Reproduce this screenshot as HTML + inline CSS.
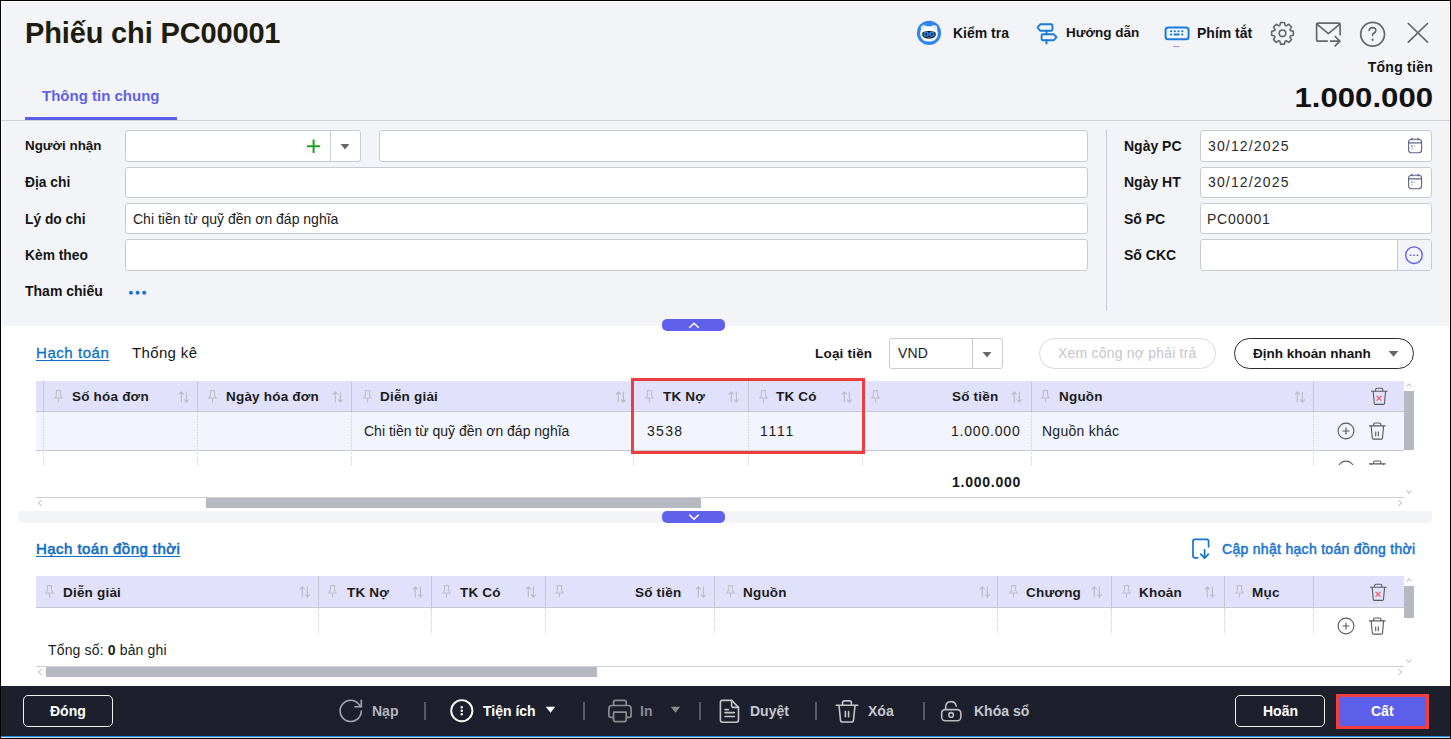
<!DOCTYPE html>
<html><head><meta charset="utf-8">
<style>
*{box-sizing:border-box;margin:0;padding:0}
html,body{width:1451px;height:739px;overflow:hidden;background:#000}
body{font-family:"Liberation Sans",sans-serif;color:#1c1c1c;position:relative}
.a{position:absolute}
.t{position:absolute;white-space:nowrap;line-height:1}
.b{font-weight:700}
#page{position:absolute;left:1px;top:1px;width:1449px;height:735px;background:#f3f4f8;border-top:1px solid #fff;border-left:1px solid #fff;border-right:1px solid #fff;overflow:hidden}
.inp{position:absolute;background:#fff;border:1px solid #c9cbd3;border-radius:3px}
.lbl{position:absolute;font-weight:700;font-size:14px;white-space:nowrap;line-height:1;color:#151515}
.hdr{position:absolute;background:#e1e1fb;border-bottom:1px solid #c7c7d0}
.vl{position:absolute;width:1px;background:#c7c7d0}
.dl{position:absolute;width:0;border-left:1px dotted #cfcfd6}
.ht{position:absolute;white-space:nowrap;line-height:1;font-weight:700;font-size:13.5px;letter-spacing:0.2px;color:#1b1b1b}
</style></head><body>

<div id="page"></div>
<!-- header -->
<div class="t b" style="left:25px;top:19px;font-size:29px;letter-spacing:-0.15px;color:#1f1d0f">Phiếu chi PC00001</div>
<div class="t b" style="left:42px;top:88px;font-size:15px;color:#5f62e6">Thông tin chung</div>
<div class="a" style="left:25px;top:117px;width:152px;height:3px;background:#5b5ee8"></div>
<div class="a" style="left:1px;top:120px;width:1449px;height:1px;background:#cfd0d6"></div>

<!-- header tools -->
<svg class="a" style="left:916px;top:20px" width="26" height="26" viewBox="0 0 26 26">
 <circle cx="13" cy="12.9" r="12.1" fill="#2f86ee"/>
 <path d="M5 9.6 Q4.2 5.6 7.6 5.2 Q9.8 5.2 10.9 6.6 Q13 6.1 15.1 6.6 Q16.2 5.2 18.4 5.2 Q21.8 5.6 21 9.6 Q22.4 12.8 21.4 16.3 Q20 21.4 13 21.6 Q6 21.4 4.6 16.3 Q3.6 12.8 5 9.6Z" fill="#fff"/>
 <path d="M5.6 8.8 Q5.4 6.3 7.6 6.1 Q9.3 6.2 10 7.4 Q8 8.1 7.2 9.9Z M20.4 8.8 Q20.6 6.3 18.4 6.1 Q16.7 6.2 16 7.4 Q18 8.1 18.8 9.9Z" fill="#d6e6fb"/>
 <path d="M6.2 13.6 Q6.4 11 13 10.9 Q19.6 11 19.8 13.6 Q20.2 18.4 13 18.7 Q5.8 18.4 6.2 13.6Z" fill="#0d0d12"/>
 <circle cx="10.2" cy="14.2" r="2.7" fill="#2a86f2"/><circle cx="15.9" cy="14.2" r="2.7" fill="#2a86f2"/>
 <ellipse cx="10.2" cy="14.3" rx="0.9" ry="1.3" fill="#0d0d12"/><ellipse cx="15.9" cy="14.3" rx="0.9" ry="1.3" fill="#0d0d12"/>
 <path d="M11.8 17.6 Q13 18.6 14.2 17.6" stroke="#bbb" stroke-width="0.8" fill="none"/>
</svg>
<div class="t b" style="left:953px;top:26px;font-size:14px;color:#151515">Kiểm tra</div>
<svg class="a" style="left:1034px;top:21px" width="26" height="26" viewBox="0 0 26 26" fill="none" stroke="#1a7ad9" stroke-width="1.9" stroke-linejoin="round" stroke-linecap="round">
 <path d="M3.5 6.5 L6.2 3.3 H17.3 Q18.4 3.3 18.4 4.4 V8.6 Q18.4 9.7 17.3 9.7 H6.2 Z"/>
 <path d="M8.6 13.3 Q7.6 13.3 7.6 14.4 V18.1 Q7.6 19.2 8.6 19.2 H19.8 L22.6 16.2 L19.8 13.3 Z"/>
 <path d="M12.5 9.7 V13.3 M12.5 19.2 V22.6"/>
</svg>
<div class="t b" style="left:1066px;top:26px;font-size:13.5px;color:#151515">Hướng dẫn</div>
<svg class="a" style="left:1162px;top:24px" width="30" height="24" viewBox="0 0 30 24" fill="none" stroke="#1a7ad9" stroke-width="2">
 <rect x="3.6" y="3.4" width="23" height="11.9" rx="2.6"/>
 <g stroke-width="1.9" stroke-linecap="round"><path d="M8.9 7.2h.4M12.6 7.2h.4M16.3 7.2h.4M20.1 7.2h.4M8.9 10.5h.4M12.5 10.5h4.2M20.1 10.5h.4"/></g>
 <path d="M11.5 22.6h6" stroke="#7a62c9" stroke-width="1" opacity="0.7"/>
</svg>
<div class="t b" style="left:1197px;top:26px;font-size:14px;color:#151515">Phím tắt</div>
<svg class="a" style="left:1268px;top:19px" width="30" height="30" viewBox="0 0 30 30" fill="none" stroke="#676767" stroke-width="1.6" stroke-linejoin="round"><path d="M11.80 6.45 L12.59 3.47 L16.41 3.47 L17.20 6.45 L18.14 6.84 L20.81 5.29 L23.51 7.99 L21.96 10.66 L22.35 11.60 L25.33 12.39 L25.33 16.21 L22.35 17.00 L21.96 17.94 L23.51 20.61 L20.81 23.31 L18.14 21.76 L17.20 22.15 L16.41 25.13 L12.59 25.13 L11.80 22.15 L10.86 21.76 L8.19 23.31 L5.49 20.61 L7.04 17.94 L6.65 17.00 L3.67 16.21 L3.67 12.39 L6.65 11.60 L7.04 10.66 L5.49 7.99 L8.19 5.29 L10.86 6.84Z"/><circle cx="14.5" cy="14.3" r="3.3"/></svg>
<svg class="a" style="left:1312px;top:19px" width="32" height="30" viewBox="0 0 32 30" fill="none" stroke="#676767" stroke-width="1.7" stroke-linecap="round" stroke-linejoin="round">
 <path d="M15.2 22.2 H6.2 Q4.6 22.2 4.6 20.6 V5.7 Q4.6 4.1 6.2 4.1 H26.6 Q28.1 4.1 28.1 5.7 V15.8"/>
 <path d="M4.9 5.2 L16.4 14.6 L27.8 5.2"/>
 <path d="M18.6 22.2 H27.9 M23.2 17.5 L27.9 22.2 L23.2 26.8"/>
</svg>
<svg class="a" style="left:1358px;top:20px" width="30" height="30" viewBox="0 0 30 30" fill="none" stroke="#676767" stroke-width="1.7" stroke-linecap="round">
 <circle cx="14.6" cy="14.2" r="11.9"/>
 <path d="M11.2 10.5 Q11.6 7.6 14.6 7.6 Q17.9 7.7 17.8 10.6 Q17.7 12.6 15.2 13.6 Q14.5 14 14.6 15.4"/>
 <path d="M14.6 19.6 v0.3" stroke-width="2"/>
</svg>
<svg class="a" style="left:1404px;top:19px" width="28" height="28" viewBox="0 0 28 28" stroke="#676767" stroke-width="1.7" stroke-linecap="round">
 <path d="M4.3 4.5 L23.5 23.2 M23.5 4.5 L4.3 23.2"/>
</svg>
<div class="t b" style="right:18px;top:60px;font-size:14px;letter-spacing:0.25px;color:#121212">Tổng tiền</div>
<div class="t b" style="right:18px;top:85px;font-size:27px;transform:scaleX(1.155);transform-origin:right top;color:#121212">1.000.000</div>


<!-- form -->
<div class="lbl" style="left:25px;top:139px;font-size:13.4px">Người nhận</div>
<div class="lbl" style="left:25px;top:176px;font-size:13.8px">Địa chi</div>
<div class="lbl" style="left:25px;top:213px;font-size:13.8px">Lý do chi</div>
<div class="lbl" style="left:25px;top:249px;font-size:13.8px">Kèm theo</div>
<div class="lbl" style="left:25px;top:284px;font-size:14px">Tham chiếu</div>
<div class="inp" style="left:125px;top:130px;width:236px;height:32px"></div>
<div class="a" style="left:330px;top:131px;width:1px;height:30px;background:#c9cbd3"></div>
<svg class="a" style="left:305px;top:138px" width="17" height="17" viewBox="0 0 17 17" stroke="#1aa51f" stroke-width="2"><path d="M8.6 1.6V15M1.9 8.3H15.2"/></svg>
<svg class="a" style="left:340px;top:143px" width="10" height="8" viewBox="0 0 10 8"><path d="M0.6 1H9.4L5 6.6Z" fill="#686868"/></svg>
<div class="inp" style="left:379px;top:130px;width:709px;height:32px"></div>
<div class="inp" style="left:125px;top:167px;width:963px;height:31px"></div>
<div class="inp" style="left:125px;top:203px;width:963px;height:31px"></div>
<div class="t" style="left:133px;top:212px;font-size:14px;color:#1b1b1b">Chi tiền từ quỹ đền ơn đáp nghĩa</div>
<div class="inp" style="left:125px;top:239px;width:963px;height:32px"></div>
<svg class="a" style="left:127px;top:288px" width="22" height="9" viewBox="0 0 22 9" fill="#1a73d0"><circle cx="4" cy="4.7" r="2"/><circle cx="10.6" cy="4.7" r="2"/><circle cx="17.2" cy="4.7" r="2"/></svg>
<div class="a" style="left:1106px;top:130px;width:1px;height:181px;background:#c9cbd3"></div>
<div class="lbl" style="left:1124px;top:139px;font-size:14px">Ngày PC</div>
<div class="lbl" style="left:1124px;top:175px;font-size:14px">Ngày HT</div>
<div class="lbl" style="left:1124px;top:212px;font-size:14px">Số PC</div>
<div class="lbl" style="left:1124px;top:248px;font-size:14px">Số CKC</div>
<div class="inp" style="left:1200px;top:130px;width:232px;height:32px"></div>
<div class="inp" style="left:1200px;top:167px;width:232px;height:31px"></div>
<div class="inp" style="left:1200px;top:203px;width:232px;height:31px"></div>
<div class="inp" style="left:1200px;top:239px;width:232px;height:32px;overflow:hidden"><div class="a" style="left:196px;top:0;width:35px;height:30px;background:#f3f4f8;border-left:1px solid #c9cbd3"></div></div>
<svg class="a" style="left:1404px;top:245px" width="20" height="20" viewBox="0 0 20 20" fill="none" stroke="#5b5ee8" stroke-width="1.3"><circle cx="10" cy="10.2" r="8.3"/><path d="M6.4 10.2h.5M9.8 10.2h.5M13.2 10.2h.5" stroke-width="1.4" stroke-linecap="round"/></svg>
<div class="t" style="left:1208px;top:139px;font-size:14px;letter-spacing:1.15px;color:#2a2a2a">30/12/2025</div>
<div class="t" style="left:1208px;top:175px;font-size:14px;letter-spacing:1.15px;color:#2a2a2a">30/12/2025</div>
<div class="t" style="left:1207px;top:212px;font-size:14px;letter-spacing:0.75px;color:#2a2a2a">PC00001</div>
<svg class="a" style="left:1407px;top:137px" width="16" height="17" viewBox="0 0 16 17" fill="none" stroke="#5d6387" stroke-width="1.1"><rect x="1.6" y="2.2" width="13" height="13.6" rx="3"/><path d="M1.6 5.9h13M5 0.8v2.5M11 0.8v2.5" stroke-width="1.3"/><path d="M5 8.6v1.3M5 11.6v.6M7.5 8.8h.6" stroke-width="1.2"/></svg><svg class="a" style="left:1407px;top:173px" width="16" height="17" viewBox="0 0 16 17" fill="none" stroke="#5d6387" stroke-width="1.1"><rect x="1.6" y="2.2" width="13" height="13.6" rx="3"/><path d="M1.6 5.9h13M5 0.8v2.5M11 0.8v2.5" stroke-width="1.3"/><path d="M5 8.6v1.3M5 11.6v.6M7.5 8.8h.6" stroke-width="1.2"/></svg>
























<!-- grid -->
<div class="a" style="left:2px;top:326px;width:1447px;height:360px;background:#fff"></div>
<div class="a" style="left:18px;top:511px;width:1414px;height:12px;background:#f3f4f8;border-radius:3px"></div>
<div class="a" style="left:662px;top:319px;width:63px;height:12px;background:#5f61ec;border-radius:5px"></div>
<svg class="a" style="left:687px;top:320px" width="14" height="10" viewBox="0 0 14 10" fill="none" stroke="#fff" stroke-width="1.5"><path d="M2.3 7.8L7 3.2l4.7 4.6"/></svg>
<div class="a" style="left:662px;top:511px;width:63px;height:12px;background:#5f61ec;border-radius:5px"></div>
<svg class="a" style="left:687px;top:512px" width="14" height="10" viewBox="0 0 14 10" fill="none" stroke="#fff" stroke-width="1.5"><path d="M2.3 2.6L7 7.2l4.7-4.6"/></svg>
<div class="t" style="left:36px;top:345px;font-size:15px;letter-spacing:0.55px;color:#0f6ec6;-webkit-text-stroke:0.3px #0f6ec6;text-decoration:underline;text-underline-offset:2px">Hạch toán</div>
<div class="t" style="left:132px;top:345px;font-size:15px;letter-spacing:0.35px;color:#151515">Thống kê</div>
<div class="lbl" style="left:815px;top:347px;font-size:13.5px;letter-spacing:0.2px">Loại tiền</div>
<div class="inp" style="left:889px;top:338px;width:114px;height:31px"></div>
<div class="a" style="left:972px;top:339px;width:1px;height:29px;background:#c9cbd3"></div>
<div class="t" style="left:898px;top:346px;font-size:14px;letter-spacing:0.2px;color:#1b1b1b">VND</div>
<svg class="a" style="left:982px;top:351px" width="10" height="8" viewBox="0 0 10 8"><path d="M0.6 1H9.4L5 6.6Z" fill="#686868"/></svg>
<div class="a" style="left:1039px;top:338px;width:177px;height:31px;border:1px solid #dadbe0;border-radius:16px"></div>
<div class="t" style="left:1058px;top:346px;font-size:14px;letter-spacing:0.2px;color:#c5c6cc">Xem công nợ phải trả</div>
<div class="a" style="left:1234px;top:338px;width:180px;height:31px;border:1px solid #2b2b2b;border-radius:16px"></div>
<div class="t b" style="left:1253px;top:347px;font-size:13.5px;color:#151515">Định khoản nhanh</div>
<svg class="a" style="left:1388px;top:350px" width="11" height="8" viewBox="0 0 11 8"><path d="M0.6 1H10.4L5.5 6.8Z" fill="#686868"/></svg>
<div class="hdr" style="left:36px;top:381px;width:1368px;height:31px"></div>
<div class="a" style="left:36px;top:412px;width:1368px;height:39px;background:#f3f5fe;border-bottom:1px solid #c7c7d0"></div>
<div class="vl" style="left:43px;top:381px;height:30px"></div>
<div class="dl" style="left:43px;top:412px;height:53px"></div>
<div class="vl" style="left:197px;top:381px;height:30px"></div>
<div class="dl" style="left:197px;top:412px;height:53px"></div>
<div class="vl" style="left:351px;top:381px;height:30px"></div>
<div class="dl" style="left:351px;top:412px;height:53px"></div>
<div class="vl" style="left:633px;top:381px;height:30px"></div>
<div class="dl" style="left:633px;top:412px;height:53px"></div>
<div class="vl" style="left:748px;top:381px;height:30px"></div>
<div class="dl" style="left:748px;top:412px;height:53px"></div>
<div class="vl" style="left:862px;top:381px;height:30px"></div>
<div class="dl" style="left:862px;top:412px;height:53px"></div>
<div class="vl" style="left:1031px;top:381px;height:30px"></div>
<div class="dl" style="left:1031px;top:412px;height:53px"></div>
<div class="vl" style="left:1313px;top:381px;height:30px"></div>
<div class="dl" style="left:1313px;top:412px;height:53px"></div>
<svg class="a" style="left:53px;top:389px" width="11" height="15" viewBox="0 0 11 15" fill="none" stroke="#bfc0c9" stroke-width="1.1"><path d="M3.4 1.6h4.2v5.2l1.6 2.2H1.8l1.6-2.2z"/><path d="M5.5 9v4.6"/></svg>
<div class="ht" style="left:72px;top:390px">Số hóa đơn</div>
<svg class="a" style="left:178px;top:390px" width="13" height="14" viewBox="0 0 13 14" fill="none" stroke="#bcbdc8" stroke-width="1.2" stroke-linecap="round" stroke-linejoin="round"><path d="M3.3 12V2M1.2 4.2l2.1-2.2 2.1 2.2M8.4 2v10M6.3 9.8l2.1 2.2 2.1-2.2"/></svg>
<svg class="a" style="left:207px;top:389px" width="11" height="15" viewBox="0 0 11 15" fill="none" stroke="#bfc0c9" stroke-width="1.1"><path d="M3.4 1.6h4.2v5.2l1.6 2.2H1.8l1.6-2.2z"/><path d="M5.5 9v4.6"/></svg>
<div class="ht" style="left:226px;top:390px">Ngày hóa đơn</div>
<svg class="a" style="left:332px;top:390px" width="13" height="14" viewBox="0 0 13 14" fill="none" stroke="#bcbdc8" stroke-width="1.2" stroke-linecap="round" stroke-linejoin="round"><path d="M3.3 12V2M1.2 4.2l2.1-2.2 2.1 2.2M8.4 2v10M6.3 9.8l2.1 2.2 2.1-2.2"/></svg>
<svg class="a" style="left:362px;top:389px" width="11" height="15" viewBox="0 0 11 15" fill="none" stroke="#bfc0c9" stroke-width="1.1"><path d="M3.4 1.6h4.2v5.2l1.6 2.2H1.8l1.6-2.2z"/><path d="M5.5 9v4.6"/></svg>
<div class="ht" style="left:380px;top:390px">Diễn giải</div>
<svg class="a" style="left:615px;top:390px" width="13" height="14" viewBox="0 0 13 14" fill="none" stroke="#bcbdc8" stroke-width="1.2" stroke-linecap="round" stroke-linejoin="round"><path d="M3.3 12V2M1.2 4.2l2.1-2.2 2.1 2.2M8.4 2v10M6.3 9.8l2.1 2.2 2.1-2.2"/></svg>
<svg class="a" style="left:644px;top:389px" width="11" height="15" viewBox="0 0 11 15" fill="none" stroke="#bfc0c9" stroke-width="1.1"><path d="M3.4 1.6h4.2v5.2l1.6 2.2H1.8l1.6-2.2z"/><path d="M5.5 9v4.6"/></svg>
<div class="ht" style="left:663px;top:390px">TK Nợ</div>
<svg class="a" style="left:728px;top:390px" width="13" height="14" viewBox="0 0 13 14" fill="none" stroke="#bcbdc8" stroke-width="1.2" stroke-linecap="round" stroke-linejoin="round"><path d="M3.3 12V2M1.2 4.2l2.1-2.2 2.1 2.2M8.4 2v10M6.3 9.8l2.1 2.2 2.1-2.2"/></svg>
<svg class="a" style="left:758px;top:389px" width="11" height="15" viewBox="0 0 11 15" fill="none" stroke="#bfc0c9" stroke-width="1.1"><path d="M3.4 1.6h4.2v5.2l1.6 2.2H1.8l1.6-2.2z"/><path d="M5.5 9v4.6"/></svg>
<div class="ht" style="left:776px;top:390px">TK Có</div>
<svg class="a" style="left:841px;top:390px" width="13" height="14" viewBox="0 0 13 14" fill="none" stroke="#bcbdc8" stroke-width="1.2" stroke-linecap="round" stroke-linejoin="round"><path d="M3.3 12V2M1.2 4.2l2.1-2.2 2.1 2.2M8.4 2v10M6.3 9.8l2.1 2.2 2.1-2.2"/></svg>
<svg class="a" style="left:870px;top:389px" width="11" height="15" viewBox="0 0 11 15" fill="none" stroke="#bfc0c9" stroke-width="1.1"><path d="M3.4 1.6h4.2v5.2l1.6 2.2H1.8l1.6-2.2z"/><path d="M5.5 9v4.6"/></svg>
<div class="ht" style="left:952px;top:390px">Số tiền</div>
<svg class="a" style="left:1011px;top:390px" width="13" height="14" viewBox="0 0 13 14" fill="none" stroke="#bcbdc8" stroke-width="1.2" stroke-linecap="round" stroke-linejoin="round"><path d="M3.3 12V2M1.2 4.2l2.1-2.2 2.1 2.2M8.4 2v10M6.3 9.8l2.1 2.2 2.1-2.2"/></svg>
<svg class="a" style="left:1040px;top:389px" width="11" height="15" viewBox="0 0 11 15" fill="none" stroke="#bfc0c9" stroke-width="1.1"><path d="M3.4 1.6h4.2v5.2l1.6 2.2H1.8l1.6-2.2z"/><path d="M5.5 9v4.6"/></svg>
<div class="ht" style="left:1059px;top:390px">Nguồn</div>
<svg class="a" style="left:1294px;top:390px" width="13" height="14" viewBox="0 0 13 14" fill="none" stroke="#bcbdc8" stroke-width="1.2" stroke-linecap="round" stroke-linejoin="round"><path d="M3.3 12V2M1.2 4.2l2.1-2.2 2.1 2.2M8.4 2v10M6.3 9.8l2.1 2.2 2.1-2.2"/></svg>
<svg class="a" style="left:1370px;top:387px" width="19" height="19" viewBox="0 0 19 19" fill="none" stroke="#5a5a5a" stroke-width="1.1"><path d="M1 4.3h16.6M5.6 4.3V2.6Q5.6 1.2 7 1.2h4.4q1.4 0 1.4 1.4v1.7M3.2 4.3l1.1 12.2q.1 .9 1 .9h8.2q.9 0 1-.9l1.1-12.2"/><path d="M6.6 8.8l4.8 4.8M11.4 8.8l-4.8 4.8" stroke="#f35656" stroke-width="1.15"/></svg>
<div class="t" style="left:364px;top:424px;font-size:14px;color:#1b1b1b">Chi tiền từ quỹ đền ơn đáp nghĩa</div>
<div class="t" style="left:647px;top:424px;font-size:14px;letter-spacing:1.3px;color:#1b1b1b">3538</div>
<div class="t" style="left:760px;top:424px;font-size:14px;letter-spacing:1.75px;color:#1b1b1b">1111</div>
<div class="t" style="left:951px;top:424px;font-size:14px;letter-spacing:0.8px;color:#1b1b1b">1.000.000</div>
<div class="t" style="left:1042px;top:424px;font-size:14px;letter-spacing:0.25px;color:#1b1b1b">Nguồn khác</div>
<svg class="a" style="left:1336px;top:421px" width="20" height="20" viewBox="0 0 20 20" fill="none" stroke="#5a5a5a" stroke-width="1.1"><circle cx="10" cy="10" r="7.9"/><path d="M10 6.5v7M6.5 10h7" stroke-width="1.15"/></svg>
<svg class="a" style="left:1368px;top:422px" width="19" height="19" viewBox="0 0 19 19" fill="none" stroke="#5a5a5a" stroke-width="1.1"><path d="M1 3.9h16.6M5.6 3.9V2.3Q5.6 1 7 1h4.4q1.4 0 1.4 1.3v1.6M3.2 3.9l1.1 12.3q.1 .9 1 .9h8.2q.9 0 1-.9l1.1-12.3"/><path d="M7.7 9.6v4.6M10.3 9.6v4.6" stroke-width="1.1"/></svg>
<div class="a" style="left:1330px;top:451px;width:70px;height:14px;overflow:hidden"><svg class="a" style="left:6px;top:8px" width="20" height="20" viewBox="0 0 20 20" fill="none" stroke="#5a5a5a" stroke-width="1.1"><circle cx="10" cy="10" r="7.9"/><path d="M10 6.5v7M6.5 10h7" stroke-width="1.15"/></svg><svg class="a" style="left:38px;top:9px" width="19" height="19" viewBox="0 0 19 19" fill="none" stroke="#5a5a5a" stroke-width="1.1"><path d="M1 3.9h16.6M5.6 3.9V2.3Q5.6 1 7 1h4.4q1.4 0 1.4 1.3v1.6M3.2 3.9l1.1 12.3q.1 .9 1 .9h8.2q.9 0 1-.9l1.1-12.3"/><path d="M7.7 9.6v4.6M10.3 9.6v4.6" stroke-width="1.1"/></svg></div>
<div class="t b" style="left:952px;top:475px;font-size:14px;letter-spacing:0.75px;color:#151515">1.000.000</div>
<div class="a" style="left:36px;top:497px;width:1368px;height:1px;background:#d0d1d6"></div>
<div class="a" style="left:206px;top:498px;width:495px;height:10px;background:#b6b9c1"></div>
<svg class="a" style="left:37px;top:499px" width="6" height="8" viewBox="0 0 6 8" fill="none" stroke="#b0b0b8" stroke-width="1"><path d="M4.5 1L1.5 4l3 3"/></svg>
<svg class="a" style="left:1397px;top:499px" width="6" height="8" viewBox="0 0 6 8" fill="none" stroke="#b0b0b8" stroke-width="1"><path d="M1.5 1l3 3-3 3"/></svg>
<div class="a" style="left:1404px;top:391px;width:10px;height:59px;background:#b6b9c1"></div>
<svg class="a" style="left:1405px;top:382px" width="8" height="6" viewBox="0 0 8 6" fill="none" stroke="#b0b0b8" stroke-width="1"><path d="M1.6 4.4l2.4-2.6 2.4 2.6"/></svg>
<svg class="a" style="left:1405px;top:489px" width="8" height="6" viewBox="0 0 8 6" fill="none" stroke="#b0b0b8" stroke-width="1"><path d="M1.6 1.6l2.4 2.6 2.4-2.6"/></svg>
<div class="a" style="left:631px;top:378px;width:234px;height:76px;border:3px solid #ee3d40"></div>
<div class="t" style="left:36px;top:541px;font-size:15px;letter-spacing:0.45px;color:#0f6ec6;-webkit-text-stroke:0.6px #0f6ec6;text-decoration:underline;text-underline-offset:2px">Hạch toán đồng thời</div>
<svg class="a" style="left:1190px;top:537px" width="22" height="24" viewBox="0 0 22 24" fill="none" stroke="#1a73d0" stroke-width="1.7" stroke-linecap="round" stroke-linejoin="round"><path d="M7.6 20.8H5q-2 0-2-2V4.4q0-2 2-2h11.6q2 0 2 2v5.4"/><path d="M14.6 12.6v8.6M10.8 17.2l3.8 3.9 3.8-3.9"/></svg>
<div class="t" style="left:1222px;top:542px;font-size:14px;letter-spacing:0.3px;color:#1a73d0;-webkit-text-stroke:0.5px #1a73d0">Cập nhật hạch toán đồng thời</div>
<div class="hdr" style="left:36px;top:576px;width:1368px;height:32px"></div>
<div class="vl" style="left:318px;top:576px;height:31px"></div>
<div class="dl" style="left:318px;top:608px;height:26px"></div>
<div class="vl" style="left:431px;top:576px;height:31px"></div>
<div class="dl" style="left:431px;top:608px;height:26px"></div>
<div class="vl" style="left:545px;top:576px;height:31px"></div>
<div class="dl" style="left:545px;top:608px;height:26px"></div>
<div class="vl" style="left:714px;top:576px;height:31px"></div>
<div class="dl" style="left:714px;top:608px;height:26px"></div>
<div class="vl" style="left:997px;top:576px;height:31px"></div>
<div class="dl" style="left:997px;top:608px;height:26px"></div>
<div class="vl" style="left:1111px;top:576px;height:31px"></div>
<div class="dl" style="left:1111px;top:608px;height:26px"></div>
<div class="vl" style="left:1224px;top:576px;height:31px"></div>
<div class="dl" style="left:1224px;top:608px;height:26px"></div>
<div class="vl" style="left:1313px;top:576px;height:31px"></div>
<div class="dl" style="left:1313px;top:608px;height:26px"></div>
<svg class="a" style="left:44px;top:584px" width="11" height="15" viewBox="0 0 11 15" fill="none" stroke="#bfc0c9" stroke-width="1.1"><path d="M3.4 1.6h4.2v5.2l1.6 2.2H1.8l1.6-2.2z"/><path d="M5.5 9v4.6"/></svg>
<div class="ht" style="left:63px;top:586px">Diễn giải</div>
<svg class="a" style="left:299px;top:585px" width="13" height="14" viewBox="0 0 13 14" fill="none" stroke="#bcbdc8" stroke-width="1.2" stroke-linecap="round" stroke-linejoin="round"><path d="M3.3 12V2M1.2 4.2l2.1-2.2 2.1 2.2M8.4 2v10M6.3 9.8l2.1 2.2 2.1-2.2"/></svg>
<svg class="a" style="left:327px;top:584px" width="11" height="15" viewBox="0 0 11 15" fill="none" stroke="#bfc0c9" stroke-width="1.1"><path d="M3.4 1.6h4.2v5.2l1.6 2.2H1.8l1.6-2.2z"/><path d="M5.5 9v4.6"/></svg>
<div class="ht" style="left:347px;top:586px">TK Nợ</div>
<svg class="a" style="left:412px;top:585px" width="13" height="14" viewBox="0 0 13 14" fill="none" stroke="#bcbdc8" stroke-width="1.2" stroke-linecap="round" stroke-linejoin="round"><path d="M3.3 12V2M1.2 4.2l2.1-2.2 2.1 2.2M8.4 2v10M6.3 9.8l2.1 2.2 2.1-2.2"/></svg>
<svg class="a" style="left:441px;top:584px" width="11" height="15" viewBox="0 0 11 15" fill="none" stroke="#bfc0c9" stroke-width="1.1"><path d="M3.4 1.6h4.2v5.2l1.6 2.2H1.8l1.6-2.2z"/><path d="M5.5 9v4.6"/></svg>
<div class="ht" style="left:460px;top:586px">TK Có</div>
<svg class="a" style="left:525px;top:585px" width="13" height="14" viewBox="0 0 13 14" fill="none" stroke="#bcbdc8" stroke-width="1.2" stroke-linecap="round" stroke-linejoin="round"><path d="M3.3 12V2M1.2 4.2l2.1-2.2 2.1 2.2M8.4 2v10M6.3 9.8l2.1 2.2 2.1-2.2"/></svg>
<svg class="a" style="left:554px;top:584px" width="11" height="15" viewBox="0 0 11 15" fill="none" stroke="#bfc0c9" stroke-width="1.1"><path d="M3.4 1.6h4.2v5.2l1.6 2.2H1.8l1.6-2.2z"/><path d="M5.5 9v4.6"/></svg>
<div class="ht" style="left:635px;top:586px">Số tiền</div>
<svg class="a" style="left:695px;top:585px" width="13" height="14" viewBox="0 0 13 14" fill="none" stroke="#bcbdc8" stroke-width="1.2" stroke-linecap="round" stroke-linejoin="round"><path d="M3.3 12V2M1.2 4.2l2.1-2.2 2.1 2.2M8.4 2v10M6.3 9.8l2.1 2.2 2.1-2.2"/></svg>
<svg class="a" style="left:725px;top:584px" width="11" height="15" viewBox="0 0 11 15" fill="none" stroke="#bfc0c9" stroke-width="1.1"><path d="M3.4 1.6h4.2v5.2l1.6 2.2H1.8l1.6-2.2z"/><path d="M5.5 9v4.6"/></svg>
<div class="ht" style="left:743px;top:586px">Nguồn</div>
<svg class="a" style="left:979px;top:585px" width="13" height="14" viewBox="0 0 13 14" fill="none" stroke="#bcbdc8" stroke-width="1.2" stroke-linecap="round" stroke-linejoin="round"><path d="M3.3 12V2M1.2 4.2l2.1-2.2 2.1 2.2M8.4 2v10M6.3 9.8l2.1 2.2 2.1-2.2"/></svg>
<svg class="a" style="left:1008px;top:584px" width="11" height="15" viewBox="0 0 11 15" fill="none" stroke="#bfc0c9" stroke-width="1.1"><path d="M3.4 1.6h4.2v5.2l1.6 2.2H1.8l1.6-2.2z"/><path d="M5.5 9v4.6"/></svg>
<div class="ht" style="left:1026px;top:586px">Chương</div>
<svg class="a" style="left:1091px;top:585px" width="13" height="14" viewBox="0 0 13 14" fill="none" stroke="#bcbdc8" stroke-width="1.2" stroke-linecap="round" stroke-linejoin="round"><path d="M3.3 12V2M1.2 4.2l2.1-2.2 2.1 2.2M8.4 2v10M6.3 9.8l2.1 2.2 2.1-2.2"/></svg>
<svg class="a" style="left:1121px;top:584px" width="11" height="15" viewBox="0 0 11 15" fill="none" stroke="#bfc0c9" stroke-width="1.1"><path d="M3.4 1.6h4.2v5.2l1.6 2.2H1.8l1.6-2.2z"/><path d="M5.5 9v4.6"/></svg>
<div class="ht" style="left:1139px;top:586px">Khoản</div>
<svg class="a" style="left:1204px;top:585px" width="13" height="14" viewBox="0 0 13 14" fill="none" stroke="#bcbdc8" stroke-width="1.2" stroke-linecap="round" stroke-linejoin="round"><path d="M3.3 12V2M1.2 4.2l2.1-2.2 2.1 2.2M8.4 2v10M6.3 9.8l2.1 2.2 2.1-2.2"/></svg>
<svg class="a" style="left:1234px;top:584px" width="11" height="15" viewBox="0 0 11 15" fill="none" stroke="#bfc0c9" stroke-width="1.1"><path d="M3.4 1.6h4.2v5.2l1.6 2.2H1.8l1.6-2.2z"/><path d="M5.5 9v4.6"/></svg>
<div class="ht" style="left:1252px;top:586px">Mục</div>
<svg class="a" style="left:1369px;top:583px" width="19" height="19" viewBox="0 0 19 19" fill="none" stroke="#5a5a5a" stroke-width="1.1"><path d="M1 4.3h16.6M5.6 4.3V2.6Q5.6 1.2 7 1.2h4.4q1.4 0 1.4 1.4v1.7M3.2 4.3l1.1 12.2q.1 .9 1 .9h8.2q.9 0 1-.9l1.1-12.2"/><path d="M6.6 8.8l4.8 4.8M11.4 8.8l-4.8 4.8" stroke="#f35656" stroke-width="1.15"/></svg>
<svg class="a" style="left:1336px;top:616px" width="20" height="20" viewBox="0 0 20 20" fill="none" stroke="#5a5a5a" stroke-width="1.1"><circle cx="10" cy="10" r="7.9"/><path d="M10 6.5v7M6.5 10h7" stroke-width="1.15"/></svg>
<svg class="a" style="left:1368px;top:617px" width="19" height="19" viewBox="0 0 19 19" fill="none" stroke="#5a5a5a" stroke-width="1.1"><path d="M1 3.9h16.6M5.6 3.9V2.3Q5.6 1 7 1h4.4q1.4 0 1.4 1.3v1.6M3.2 3.9l1.1 12.3q.1 .9 1 .9h8.2q.9 0 1-.9l1.1-12.3"/><path d="M7.7 9.6v4.6M10.3 9.6v4.6" stroke-width="1.1"/></svg>
<div class="t" style="left:48px;top:643px;font-size:14px;letter-spacing:0.15px;color:#1b1b1b">Tổng số: <b>0</b> bản ghi</div>
<div class="a" style="left:36px;top:666px;width:1368px;height:1px;background:#d0d1d6"></div>
<div class="a" style="left:46px;top:667px;width:551px;height:10px;background:#b6b9c1"></div>
<svg class="a" style="left:37px;top:668px" width="6" height="8" viewBox="0 0 6 8" fill="none" stroke="#b0b0b8" stroke-width="1"><path d="M4.5 1L1.5 4l3 3"/></svg>
<svg class="a" style="left:1397px;top:668px" width="6" height="8" viewBox="0 0 6 8" fill="none" stroke="#b0b0b8" stroke-width="1"><path d="M1.5 1l3 3-3 3"/></svg>
<div class="a" style="left:1404px;top:586px;width:10px;height:32px;background:#b6b9c1"></div>
<svg class="a" style="left:1405px;top:577px" width="8" height="6" viewBox="0 0 8 6" fill="none" stroke="#b0b0b8" stroke-width="1"><path d="M1.6 4.4l2.4-2.6 2.4 2.6"/></svg>
<svg class="a" style="left:1405px;top:658px" width="8" height="6" viewBox="0 0 8 6" fill="none" stroke="#b0b0b8" stroke-width="1"><path d="M1.6 1.6l2.4 2.6 2.4-2.6"/></svg>
<!-- /grid -->
<!-- footer -->
<div class="a" style="left:1px;top:686px;width:1449px;height:50px;background:#1e1f2d"></div>
<div class="a" style="left:1px;top:736px;width:1449px;height:1px;background:#1b8ae8"></div>
<div class="a" style="left:1px;top:737px;width:1449px;height:1px;background:#d8d8d8"></div>
<div class="a" style="left:23px;top:695px;width:90px;height:32px;border:1.5px solid #f0f0f0;border-radius:5px"></div>
<div class="t b" style="left:50px;top:704px;font-size:14px;color:#fff">Đóng</div>
<div class="a" style="left:1235px;top:695px;width:90px;height:32px;border:1.5px solid #f0f0f0;border-radius:5px"></div>
<div class="t b" style="left:1263px;top:704px;font-size:14px;color:#fff">Hoãn</div>
<div class="a" style="left:1336px;top:694px;width:93px;height:35px;background:#5b5fea;border:3px solid #f13f3f"></div>
<div class="t b" style="left:1371px;top:704px;font-size:14px;color:#fff">Cất</div>
<div class="a" style="left:424px;top:702px;width:2px;height:18px;background:#575968"></div>
<div class="a" style="left:583px;top:702px;width:2px;height:18px;background:#575968"></div>
<div class="a" style="left:699px;top:702px;width:2px;height:18px;background:#575968"></div>
<div class="a" style="left:815px;top:702px;width:2px;height:18px;background:#575968"></div>
<div class="a" style="left:923px;top:702px;width:2px;height:18px;background:#575968"></div>
<svg class="a" style="left:336px;top:697px" width="30" height="28" viewBox="0 0 30 28" fill="none" stroke="#a5a6ad" stroke-width="1.6" stroke-linecap="round" stroke-linejoin="round"><path d="M24.4 9.6 A10.6 10.6 0 1 0 25.3 14"/><path d="M25.3 3.2v6.6h-6.4"/></svg>
<div class="t b" style="left:372px;top:704px;font-size:14px;color:#b5b6bd">Nạp</div>
<svg class="a" style="left:449px;top:698px" width="26" height="26" viewBox="0 0 26 26" fill="none" stroke="#fff" stroke-width="1.9"><circle cx="12.8" cy="12.7" r="10.6"/><g fill="#fff" stroke="none"><circle cx="12.8" cy="9.2" r="1.2"/><circle cx="12.8" cy="12.7" r="1.2"/><circle cx="12.8" cy="16.2" r="1.2"/></g></svg>
<div class="t b" style="left:483px;top:704px;font-size:14px;color:#fff">Tiện ích</div>
<svg class="a" style="left:545px;top:706px" width="11" height="8" viewBox="0 0 11 8"><path d="M0.8 0.8H10.2L5.5 6.8Z" fill="#fff"/></svg>
<svg class="a" style="left:606px;top:698px" width="28" height="27" viewBox="0 0 28 27" fill="none" stroke="#8b8c93" stroke-width="1.7" stroke-linejoin="round"><path d="M7.6 7.5V4.1q0-1.8 1.8-1.8h9q1.8 0 1.8 1.8v3.4"/><path d="M7.4 19.4H4.8q-1.9 0-1.9-1.9v-6.8q0-3.2 3.2-3.2h15.8q3.2 0 3.2 3.2v6.8q0 1.9-1.9 1.9h-2.7"/><path d="M7.6 14.2h12.6v7.6q0 1.8-1.8 1.8h-9q-1.8 0-1.8-1.8z"/></svg>
<div class="t b" style="left:640px;top:704px;font-size:14px;color:#8a8b92">In</div>
<svg class="a" style="left:670px;top:706px" width="11" height="8" viewBox="0 0 11 8"><path d="M0.8 0.8H10.2L5.5 6.8Z" fill="#8a8b92"/></svg>
<svg class="a" style="left:718px;top:698px" width="24" height="27" viewBox="0 0 24 27" fill="none" stroke="#c4c5cb" stroke-width="1.6" stroke-linejoin="round" stroke-linecap="round"><path d="M4.3 2.4h9.4l6.8 7v12.6q0 2.2-2.2 2.2H4.6q-2.2 0-2.2-2.2V4.6q0-2.2 1.9-2.2z"/><path d="M13.6 2.6v4.8q0 2 2 2h4.8"/><path d="M7 11.6h3.4M7 14.6h9.4M7 18.5h9.4"/></svg>
<div class="t b" style="left:750px;top:704px;font-size:14px;color:#c6c7cd">Duyệt</div>
<svg class="a" style="left:834px;top:698px" width="26" height="27" viewBox="0 0 26 27" fill="none" stroke="#c4c5cb" stroke-width="1.6" stroke-linejoin="round" stroke-linecap="round"><path d="M2.2 7.3h21.6M8.6 7.1V4.8q0-1.9 1.9-1.9h5q1.9 0 1.9 1.9v2.3M5 7.5l1.5 14.6q.2 1.9 2.1 1.9h8.8q1.9 0 2.1-1.9L21 7.5"/><path d="M11.4 13.6v5.2M14.6 13.6v5.2"/></svg>
<div class="t b" style="left:868px;top:704px;font-size:14px;color:#c6c7cd">Xóa</div>
<svg class="a" style="left:938px;top:698px" width="26" height="27" viewBox="0 0 26 27" fill="none" stroke="#b9bac1" stroke-width="1.6" stroke-linejoin="round" stroke-linecap="round"><path d="M7.7 11.4V8.8q0-5.2 5.3-5.2 4.6 0 5.2 4.5"/><rect x="3.7" y="11.6" width="19.1" height="11.1" rx="3.4"/><circle cx="13.1" cy="16.9" r="2.3"/></svg>
<div class="t b" style="left:974px;top:704px;font-size:14px;color:#c6c7cd">Khóa sổ</div>
<!-- /footer -->
</body></html>
